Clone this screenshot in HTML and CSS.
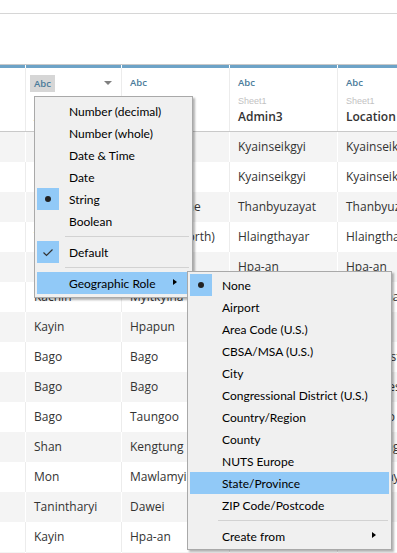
FILE: index.html
```html
<!DOCTYPE html>
<html>
<head>
<meta charset="utf-8">
<link rel="stylesheet" href="styles.css">
</head>
<body>
<div class="page">
  <div class="topbar"></div>
  <div class="spacer"></div>
  <div class="grid">
    <div class="hrow">
      <div class="hcell"></div>
      <div class="hcell">
        <div class="typeline"><span class="abc sel">Abc</span><span class="caret"></span></div>
        <div class="src">Sheet1</div>
        <div class="fname">Admin1</div>
      </div>
      <div class="hcell">
        <div class="typeline"><span class="abc">Abc</span></div>
        <div class="src">Sheet1</div>
        <div class="fname">Admin2</div>
      </div>
      <div class="hcell">
        <div class="typeline"><span class="abc">Abc</span></div>
        <div class="src">Sheet1</div>
        <div class="fname">Admin3</div>
      </div>
      <div class="hcell">
        <div class="typeline"><span class="abc">Abc</span></div>
        <div class="src">Sheet1</div>
        <div class="fname">Location</div>
      </div>
    </div>
    <div class="row alt"><div class="c"></div><div class="c">Kayin</div><div class="c">Kawkareik</div><div class="c">Kyainseikgyi</div><div class="c">Kyainseikgyi</div></div>
    <div class="row"><div class="c"></div><div class="c">Kayin</div><div class="c">Kawkareik</div><div class="c">Kyainseikgyi</div><div class="c">Kyainseikgyi</div></div>
    <div class="row alt"><div class="c"></div><div class="c">Mon</div><div class="c">Mawlamyine</div><div class="c">Thanbyuzayat</div><div class="c">Thanbyuzayat</div></div>
    <div class="row"><div class="c"></div><div class="c">Yangon</div><div class="c">Yangon (North)</div><div class="c">Hlaingthayar</div><div class="c">Hlaingthayar</div></div>
    <div class="row alt"><div class="c"></div><div class="c">Kayin</div><div class="c">Hpa-an</div><div class="c">Hpa-an</div><div class="c">Hpa-an</div></div>
    <div class="row"><div class="c"></div><div class="c">Kachin</div><div class="c">Myitkyina</div><div class="c">Myitkyina</div><div class="c">Myitkyina</div></div>
    <div class="row alt"><div class="c"></div><div class="c">Kayin</div><div class="c">Hpapun</div><div class="c">Hpapun</div><div class="c">Hpapun</div></div>
    <div class="row"><div class="c"></div><div class="c">Bago</div><div class="c">Bago</div><div class="c">Bago</div><div class="c">Bago East</div></div>
    <div class="row alt"><div class="c"></div><div class="c">Bago</div><div class="c">Bago</div><div class="c">Bago</div><div class="c">Bago West</div></div>
    <div class="row"><div class="c"></div><div class="c">Bago</div><div class="c">Taungoo</div><div class="c">Taungoo</div><div class="c">Taungoo City</div></div>
    <div class="row alt"><div class="c"></div><div class="c">Shan</div><div class="c">Kengtung</div><div class="c">Kengtung</div><div class="c">Kengtung</div></div>
    <div class="row"><div class="c"></div><div class="c">Mon</div><div class="c">Mawlamyine</div><div class="c">Mawlamyine</div><div class="c">Mawlamyine</div></div>
    <div class="row alt"><div class="c"></div><div class="c">Tanintharyi</div><div class="c">Dawei</div><div class="c">Dawei</div><div class="c">Dawei</div></div>
    <div class="row"><div class="c"></div><div class="c">Kayin</div><div class="c">Hpa-an</div><div class="c">Hpa-an</div><div class="c">Hpa-an</div></div>
    <div class="row alt"><div class="c"></div><div class="c">Kayin</div><div class="c">Hpa-an</div><div class="c">Hpa-an</div><div class="c">Hpa-an</div></div>
  </div>

  <div class="menu menu-type">
    <div class="mi"><span class="ico"></span><span class="lbl">Number (decimal)</span></div>
    <div class="mi"><span class="ico"></span><span class="lbl">Number (whole)</span></div>
    <div class="mi"><span class="ico"></span><span class="lbl">Date &amp; Time</span></div>
    <div class="mi"><span class="ico"></span><span class="lbl">Date</span></div>
    <div class="mi"><span class="ico on"><span class="dot"></span></span><span class="lbl">String</span></div>
    <div class="mi"><span class="ico"></span><span class="lbl">Boolean</span></div>
    <div class="sep"></div>
    <div class="mi"><span class="ico on"><svg width="22" height="22" viewBox="0 0 22 22"><polyline points="6.5,11.5 9.5,14.5 15.5,8.5" fill="none" stroke="#333" stroke-width="1.2"/></svg></span><span class="lbl">Default</span></div>
    <div class="sep"></div>
    <div class="mi hl"><span class="ico"></span><span class="lbl">Geographic Role</span><span class="sub"></span></div>
  </div>

  <div class="menu menu-geo">
    <div class="mi"><span class="ico on"><span class="dot"></span></span><span class="lbl">None</span></div>
    <div class="mi"><span class="ico"></span><span class="lbl">Airport</span></div>
    <div class="mi"><span class="ico"></span><span class="lbl">Area Code (U.S.)</span></div>
    <div class="mi"><span class="ico"></span><span class="lbl">CBSA/MSA (U.S.)</span></div>
    <div class="mi"><span class="ico"></span><span class="lbl">City</span></div>
    <div class="mi"><span class="ico"></span><span class="lbl">Congressional District (U.S.)</span></div>
    <div class="mi"><span class="ico"></span><span class="lbl">Country/Region</span></div>
    <div class="mi"><span class="ico"></span><span class="lbl">County</span></div>
    <div class="mi"><span class="ico"></span><span class="lbl">NUTS Europe</span></div>
    <div class="mi hl"><span class="ico"></span><span class="lbl">State/Province</span></div>
    <div class="mi"><span class="ico"></span><span class="lbl">ZIP Code/Postcode</span></div>
    <div class="sep"></div>
    <div class="mi"><span class="ico"></span><span class="lbl">Create from</span><span class="sub"></span></div>
  </div>
</div>
</body>
</html>
```

FILE: styles.css
```css
html, body {
  margin: 0;
  padding: 0;
  background: #fff;
}
.page {
  position: relative;
  width: 397px;
  height: 553px;
  overflow: hidden;
  font-family: "Open Sans", "Noto Sans", sans-serif;
}
.topbar {
  height: 13px;
  border-bottom: 1px solid #d6d6d6;
}
.spacer {
  height: 50px;
}
.grid {
  display: flex;
  flex-direction: column;
  border-top: 1px solid #c9c9c9;
}
.hrow, .row {
  display: grid;
  grid-template-columns: 25px 95px 107px 107px 1fr;
  column-gap: 1px;
}
.hrow {
  height: 66px;
  border-bottom: 1px solid #c9c9c9;
  background: linear-gradient(#fff 0, #fff 3px, #ececec 3px);
}
.hcell {
  background: #fff;
  border-top: 3px solid #6da3c7;
  padding: 9px 0 0 8px;
  min-width: 0;
}
.typeline {
  display: flex;
  align-items: center;
  justify-content: space-between;
  height: 12px;
  padding-right: 9px;
}
.abc {
  font-family: "Open Sans", "Noto Sans", sans-serif;
  font-weight: 600;
  font-size: 9.5px;
  color: #4a7b9a;
  line-height: 12px;
}
.abc.sel {
  background: #d6d6d6;
  padding: 3px 4px 2px;
  margin-left: -4px;
}
.caret {
  width: 0;
  height: 0;
  border-left: 4px solid transparent;
  border-right: 4px solid transparent;
  border-top: 4px solid #808080;
}
.src {
  margin-top: 6px;
  font-family: "Liberation Sans", Arial, sans-serif;
  font-size: 9px;
  line-height: 12px;
  color: #c2c2c2;
}
.fname {
  margin-top: 2px;
  font-size: 12px;
  font-weight: 600;
  line-height: 16px;
  color: #333;
  white-space: nowrap;
}
.row {
  height: 30px;
  background: #ececec;
}
.row .c {
  background: #fff;
  padding-left: 8px;
  font-size: 12px;
  line-height: 30px;
  color: #333;
  white-space: nowrap;
  overflow: hidden;
}
.row.alt {
  background: #fff;
}
.row.alt .c {
  background: #f4f4f4;
}

/* menus */
.menu {
  position: absolute;
  background: #f0f0f0;
  border: 1px solid #a9a9a9;
  box-shadow: 2px 2px 2px rgba(0, 0, 0, 0.3);
  padding: 3px 2px 3px 2px;
  font-family: "Lato", "Open Sans", sans-serif;
  font-size: 12px;
  color: #000;
}
.menu-type {
  left: 34px;
  top: 96px;
  width: 153px;
}
.menu-geo {
  left: 187px;
  top: 271px;
  width: 199px;
  padding-top: 2px;
  padding-bottom: 2px;
}
.mi {
  display: flex;
  align-items: center;
  height: 22px;
  position: relative;
}
.mi.hl {
  background: #91c9f7;
}
.ico {
  width: 22px;
  height: 22px;
  flex: none;
  display: flex;
  align-items: center;
  justify-content: center;
}
.ico.on {
  background: #91c9f7;
}
.dot {
  width: 6px;
  height: 6px;
  border-radius: 50%;
  background: #222;
}
.lbl {
  margin-left: 10px;
  white-space: nowrap;
}
.sub {
  position: absolute;
  right: 13px;
  top: 7px;
  width: 0;
  height: 0;
  border-top: 3.5px solid transparent;
  border-bottom: 3.5px solid transparent;
  border-left: 4px solid #000;
}
.sep {
  height: 9px;
  display: flex;
  align-items: center;
  padding-left: 28px;
  padding-right: 1px;
}
.sep::before {
  content: "";
  flex: 1;
  height: 1px;
  background: #d2d2d2;
}
```
